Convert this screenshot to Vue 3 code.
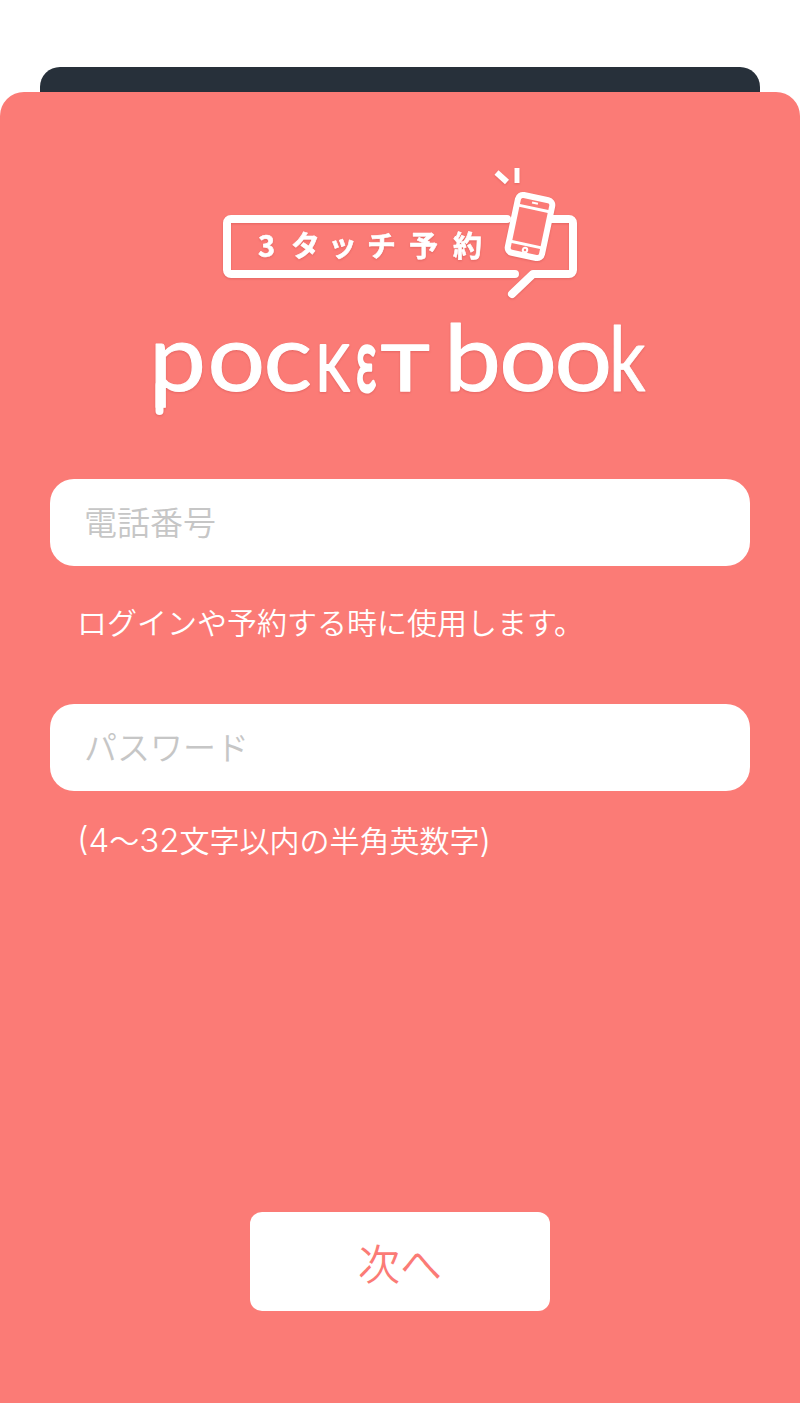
<script setup>
const fields = [
  {
    id: 'tel',
    placeholder: '電話番号',
    note: [{ text: 'ログインや予約する時に使用します。' }],
    tight: false,
  },
  {
    id: 'pw',
    placeholder: 'パスワード',
    note: [
      { text: '(4', latin: true },
      { text: '〜' },
      { text: '32', latin: true },
      { text: '文字以内の半角英数字' },
      { text: ')', latin: true },
    ],
    tight: true,
  },
]
</script>

<template>
  <div class="page">
    <div class="back-sheet"></div>
    <main class="card">
      <svg class="logo" viewBox="140 165 520 255" width="520" height="255" role="img" aria-label="3タッチ予約 pocket book">
        <path class="line" d="M507 219H231a4 4 0 0 0-4 4V270a4 4 0 0 0 4 4H515" />
        <path class="line" d="M550 219H569a4 4 0 0 1 4 4V270a4 4 0 0 1-4 4H533L512 294" />
        <text class="badge-text" x="258 291 328 367 409 453" y="257">3タッチ予約</text>
        <g transform="rotate(12 530 226.500)">
          <rect class="phone" x="512.500" y="197" width="35" height="59" rx="5" />
          <path class="band" d="M513 208H547M513 245H547" />
          <path class="detail" d="M527 202.500H533" />
          <circle class="detail" cx="530" cy="250.500" r="2.200" />
        </g>
        <path class="tick tick-wide" d="M496.500 172.500L507 182" />
        <path class="tick" d="M517 168V183" />

        <path class="line" d="M159.500 385V411" />
        <text class="word round" x="0 51.800 101.300" transform="translate(149 391) scale(1.13 1.03)">poc</text>
        <text class="word cap" transform="translate(316 391) scale(0.8 1)">K</text>
        <text class="word narrow" transform="translate(356 391) scale(0.5 1)">ε</text>
        <text class="word cap" transform="translate(381 391) scale(1.3 1)">T</text>
        <text class="word round" x="0 49 97.800" transform="translate(444 391) scale(1.13 1.03)">boo</text>
        <text class="word" transform="translate(609 391) scale(0.8 1)">k</text>
      </svg>

      <form class="form" @submit.prevent>
        <div v-for="field in fields" :key="field.id" class="field" :class="{ tight: field.tight }">
          <div class="input"><span class="placeholder">{{ field.placeholder }}</span></div>
          <p class="note"><span v-for="(part, i) in field.note" :key="i" :class="{ latin: part.latin }">{{ part.text }}</span></p>
        </div>
      </form>

      <button class="next" type="button">次へ</button>
    </main>
  </div>
</template>

<style scoped>
.page {
  width: 800px;
  height: 1403px;
  padding-top: 67px;
  box-sizing: border-box;
  background: #fff;
  display: flex;
  flex-direction: column;
  font-family: "Noto Sans CJK JP", "Noto Sans", sans-serif;
  overflow: hidden;
}
.back-sheet {
  height: 25px;
  margin: 0 40px;
  flex: none;
  background: #27303a;
  border-radius: 20px 20px 0 0;
}
.card {
  flex: 1;
  display: flex;
  flex-direction: column;
  align-items: center;
  padding-top: 73px;
  background: #fb7b76;
  border-radius: 24px 24px 0 0;
}
.logo {
  display: block;
  flex: none;
  filter: drop-shadow(0 1px 1px rgba(190, 60, 60, 0.35));
}
.line {
  fill: none;
  stroke: #fff;
  stroke-width: 8;
  stroke-linecap: round;
  stroke-linejoin: round;
}
.phone {
  fill: #fb7b76;
  stroke: #fff;
  stroke-width: 6;
}
.band {
  fill: none;
  stroke: #fff;
  stroke-width: 3;
}
.detail {
  fill: none;
  stroke: #fff;
  stroke-width: 2;
}
.tick {
  fill: none;
  stroke: #fff;
  stroke-width: 5;
}
.tick-wide {
  stroke-width: 6;
}
.badge-text {
  fill: #fff;
  stroke: #fff;
  stroke-width: 0.6;
  stroke-linejoin: round;
  font-family: "Noto Sans CJK JP", sans-serif;
  font-size: 29px;
  font-weight: 700;
}
.word {
  fill: #fff;
  stroke: #fff;
  stroke-width: 0.8;
  stroke-linejoin: round;
  font-family: Lato, "Open Sans", sans-serif;
  font-size: 90px;
}
.round {
  stroke-width: 1;
}
.cap {
  font-size: 63px;
  stroke-width: 2;
  vector-effect: non-scaling-stroke;
}
.narrow {
  stroke-width: 2.5;
  vector-effect: non-scaling-stroke;
}
.form {
  width: 700px;
  margin-top: 59px;
  display: flex;
  flex-direction: column;
  gap: 61px;
}
.field {
  display: flex;
  flex-direction: column;
}
.input {
  height: 87px;
  padding: 0 0 3px 34px;
  box-sizing: border-box;
  display: flex;
  align-items: center;
  background: #fff;
  border-radius: 24px;
}
.placeholder {
  color: #c6c6c6;
  font-size: 33px;
  font-weight: 350;
}
.note {
  margin: 33px 0 0;
  padding-left: 27px;
  color: #fff;
  font-size: 30px;
  line-height: 44px;
  font-weight: 350;
}
.latin {
  font-family: Inter, sans-serif;
  font-size: 33px;
  font-weight: 300;
}
.tight .note {
  margin-top: 26px;
}
.next {
  width: 300px;
  height: 99px;
  margin-top: auto;
  margin-bottom: 92px;
  border: none;
  border-radius: 12px;
  background: #fff;
  color: #fb7b76;
  font-family: inherit;
  font-size: 42px;
  font-weight: 350;
}
</style>
